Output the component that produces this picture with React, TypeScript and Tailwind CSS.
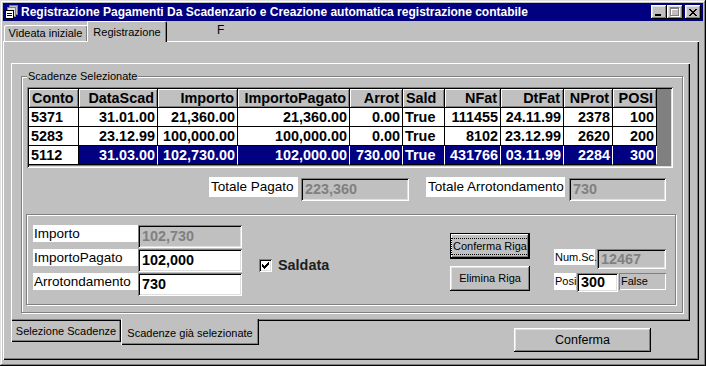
import React from "react";

const raised =
  "shadow-[inset_-1px_-1px_#000,inset_1px_1px_#fff,inset_-2px_-2px_#808080,inset_2px_2px_#dfdfdf]";
const sunken =
  "shadow-[inset_1px_1px_#808080,inset_-1px_-1px_#fff,inset_2px_2px_#000,inset_-2px_-2px_#dfdfdf]";
const etched = "border border-[#808080] shadow-[inset_1px_1px_#fff,1px_1px_#fff]";

type Col = { title: string; w: string; align: "left" | "right" };

const cols: Col[] = [
  { title: "Conto", w: "w-[50px]", align: "left" },
  { title: "DataScad", w: "w-[79px]", align: "right" },
  { title: "Importo", w: "w-[80px]", align: "right" },
  { title: "ImportoPagato", w: "w-[112px]", align: "right" },
  { title: "Arrot", w: "w-[53px]", align: "right" },
  { title: "Sald", w: "w-[42px]", align: "left" },
  { title: "NFat", w: "w-[56px]", align: "right" },
  { title: "DtFat", w: "w-[63px]", align: "right" },
  { title: "NProt", w: "w-[49px]", align: "right" },
  { title: "POSI", w: "w-[44px]", align: "right" },
];

const rows = [
  ["5371", "31.01.00", "21,360.00", "21,360.00", "0.00", "True", "111455", "24.11.99", "2378", "100"],
  ["5283", "23.12.99", "100,000.00", "100,000.00", "0.00", "True", "8102", "23.12.99", "2620", "200"],
  ["5112", "31.03.00", "102,730.00", "102,000.00", "730.00", "True", "431766", "03.11.99", "2284", "300"],
];

const AppIcon = () => (
  <svg width="16" height="16" viewBox="0 0 16 16" shapeRendering="crispEdges">
    <rect x="5" y="1" width="9" height="10" fill="#808080" />
    <rect x="6" y="2" width="7" height="8" fill="#c0c0c0" />
    <rect x="3" y="3" width="9" height="10" fill="#808080" />
    <rect x="4" y="4" width="7" height="8" fill="#dfdfdf" />
    <rect x="1" y="6" width="9" height="9" fill="#000" />
    <rect x="2" y="7" width="7" height="7" fill="#fff" />
    <rect x="3" y="9" width="5" height="1" fill="#000" />
    <rect x="3" y="11" width="5" height="1" fill="#000" />
  </svg>
);

const CloseGlyph = () => (
  <svg width="8" height="7" viewBox="0 0 8 7" shapeRendering="crispEdges">
    {[0, 1, 2, 3, 4, 5, 6].map((i) => (
      <g key={i}>
        <rect x={i} y={i} width="2" height="1" fill="#000" />
        <rect x={6 - i} y={i} width="2" height="1" fill="#000" />
      </g>
    ))}
  </svg>
);

const TitleBar = () => (
  <div className="flex h-[18px] items-center bg-[#000080]">
    <div className="ml-[1px]">
      <AppIcon />
    </div>
    <span className="ml-[1px] text-[12px] font-bold leading-none text-white">
      Registrazione Pagamenti Da Scadenzario e Creazione automatica registrazione contabile
    </span>
    <div className="ml-auto mr-[2px] flex items-center">
      <div className={`flex h-[14px] w-[16px] items-end bg-[#c0c0c0] pb-[3px] pl-[4px] ${raised}`}>
        <div className="h-[2px] w-[6px] bg-black" />
      </div>
      <div className={`relative h-[14px] w-[16px] bg-[#c0c0c0] ${raised}`}>
        <div className="absolute left-[4px] top-[3px] h-[9px] w-[9px] border border-t-2 border-white" />
        <div className="absolute left-[3px] top-[2px] h-[9px] w-[9px] border border-t-2 border-[#808080]" />
      </div>
      <div className={`ml-[2px] flex h-[14px] w-[16px] items-center justify-center bg-[#c0c0c0] ${raised}`}>
        <CloseGlyph />
      </div>
    </div>
  </div>
);

const TopTabs = () => (
  <div className="flex h-[20px] items-end pl-[1px] text-[11px]">
    <div className="flex h-[16px] w-[83px] items-center justify-center rounded-tl-[2px] shadow-[inset_1px_1px_#fff,inset_-1px_0_#808080]">
      Videata iniziale
    </div>
    <div className="relative z-10 -mb-[1px] flex h-[21px] w-[80px] items-start justify-center rounded-tr-[2px] bg-[#c0c0c0] pt-[3px] shadow-[inset_1px_1px_#fff,inset_-1px_0_#000,inset_-2px_0_#808080]">
      Registrazione
    </div>
    <div className="ml-[50px] mt-[2px] self-start text-[12px] leading-[14px]">F</div>
  </div>
);

const Grid = () => (
  <div className={`h-[81px] w-[646px] bg-[#808080] p-[2px] ${sunken}`}>
    <div className="flex h-[19px]">
      {cols.map((c) => (
        <div
          key={c.title}
          className={`${c.w} flex h-[19px] items-center border-b border-r border-black bg-[#c0c0c0] px-[3px] text-[14.4px] font-bold leading-[18px] shadow-[inset_1px_1px_#fff,inset_-1px_-1px_#808080] ${
            c.align === "right" ? "justify-end" : "justify-start"
          }`}
        >
          {c.title}
        </div>
      ))}
    </div>
    {rows.map((r, ri) => {
      const sel = ri === 2;
      return (
        <div key={ri} className="flex h-[19px]">
          {r.map((v, ci) => {
            const c = cols[ci];
            const hi = sel && ci > 0;
            return (
              <div
                key={ci}
                className={`${c.w} flex h-[19px] items-center border-b border-r px-[2px] text-[14.4px] font-bold leading-[18px] ${
                  hi ? "border-white border-b-black bg-[#000080] text-white" : "border-black bg-white text-black"
                } ${c.align === "right" ? "justify-end" : "justify-start"}`}
              >
                {v}
              </div>
            );
          })}
        </div>
      );
    })}
  </div>
);

const Label = ({ w, h, children, cls = "" }: { w: string; h: string; children: React.ReactNode; cls?: string }) => (
  <div className={`${w} ${h} flex items-center whitespace-nowrap bg-white pl-[1px] leading-none ${cls}`}>{children}</div>
);

const Field = ({
  w,
  h,
  value,
  disabled = false,
}: {
  w: string;
  h: string;
  value: string;
  disabled?: boolean;
}) => (
  <div
    className={`${w} ${h} flex items-center pl-[4px] text-[14.4px] font-bold leading-none ${sunken} ${
      disabled ? "bg-[#c0c0c0] text-[#808080]" : "bg-white text-black"
    }`}
  >
    {value}
  </div>
);

const Checkbox = () => (
  <div className={`flex h-[13px] w-[13px] items-center justify-center bg-white ${sunken}`}>
    <svg width="7" height="7" viewBox="0 0 7 7" shapeRendering="crispEdges">
      <path d="M0 2h1v1h1v1h1v-1h1v-1h1v-1h1v-1h1v3h-1v1h-1v1h-1v1h-1v1h-1v-1h-1v-1h-1z" fill="#000" />
    </svg>
  </div>
);

export default function App() {
  return (
    <div className="font-['Liberation_Sans',Arial,sans-serif] text-black">
      <div className="flex h-[366px] w-[706px] flex-col bg-[#c0c0c0] p-[3px] shadow-[inset_-1px_-1px_#000,inset_1px_1px_#dfdfdf,inset_-2px_-2px_#808080,inset_2px_2px_#fff]">
        <TitleBar />
        <TopTabs />

        {/* pannello Registrazione */}
        <div className="flex h-[319px] w-[696px] flex-col pl-[8px] pt-[22px] shadow-[inset_1px_1px_#fff,inset_-1px_-1px_#000,inset_-2px_-2px_#808080]">
          {/* tab interno, linguette in basso */}
          <div className="h-[258px] w-[679px] pl-[10px] pt-[13px] shadow-[inset_1px_1px_#fff,inset_-1px_-1px_#000,inset_-2px_-2px_#808080]">
            <div className={`relative h-[237px] w-[662px] ${etched}`}>
              <div className="absolute -top-[8px] left-[5px] bg-[#c0c0c0] px-[1px] text-[11px] leading-[14px]">
                Scadenze Selezionate
              </div>

              <div className="ml-[5px] mt-[10px]">
                <Grid />
              </div>

              <div className="mt-[9px] flex items-start text-[13.5px]">
                <Label w="w-[89px] ml-[187px]" h="h-[20px]" cls="pl-[2px]">
                  Totale Pagato
                </Label>
                <div className="ml-[3px] mt-[1px]">
                  <Field w="w-[108px]" h="h-[23px]" value="223,360" disabled />
                </div>
                <Label w="w-[139px] ml-[17px]" h="h-[20px]" cls="pl-[2px]">
                  Totale Arrotondamento
                </Label>
                <div className="ml-[4px] mt-[1px]">
                  <Field w="w-[97px]" h="h-[23px]" value="730" disabled />
                </div>
              </div>

              {/* riquadro riga selezionata */}
              <div className={`ml-[4px] mt-[13px] flex h-[91px] w-[650px] items-start ${etched}`}>
                <div className="ml-[6px] mt-[10px] flex flex-col gap-[1px] text-[13.5px]">
                  {[
                    ["Importo", "102,730", true],
                    ["ImportoPagato", "102,000", false],
                    ["Arrotondamento", "730", false],
                  ].map(([l, v, d]) => (
                    <div key={l as string} className="flex h-[23px] items-start">
                      <Label w="w-[105px]" h="h-[17px]">
                        {l}
                      </Label>
                      <Field w="w-[104px]" h="h-[23px]" value={v as string} disabled={d as boolean} />
                    </div>
                  ))}
                </div>

                <div className="ml-[17px] mt-[43px] flex w-[191px] items-center gap-[6px]">
                  <Checkbox />
                  <span className="text-[14.4px] font-bold leading-none text-[#202020]">Saldata</span>
                </div>

                <div className="mt-[18px] flex flex-col gap-[7px] whitespace-nowrap text-[11px]">
                  <div className="flex h-[26px] w-[80px] items-center justify-center border border-black bg-[#c0c0c0] shadow-[inset_-1px_-1px_#000,inset_1px_1px_#fff,inset_-2px_-2px_#808080]">
                    <span className="border border-dotted border-black px-[1px] leading-[15px]">Conferma Riga</span>
                  </div>
                  <div className={`flex h-[25px] w-[80px] items-center justify-center bg-[#c0c0c0] ${raised}`}>
                    Elimina Riga
                  </div>
                </div>

                <div className="ml-[24px] mt-[34px] flex flex-col gap-[4px] text-[11px]">
                  <div className="flex items-start">
                    <Label w="w-[41px]" h="h-[16px]">
                      Num.Sc.
                    </Label>
                    <div className="ml-[2px]">
                      <Field w="w-[69px]" h="h-[20px]" value="12467" disabled />
                    </div>
                  </div>
                  <div className="flex items-start">
                    <Label w="w-[22px]" h="h-[17px]">
                      Posi
                    </Label>
                    <div className="ml-[1px]">
                      <Field w="w-[41px]" h="h-[19px]" value="300" />
                    </div>
                    <div className="ml-[1px] flex h-[17px] w-[47px] items-center pl-[2px] leading-none shadow-[inset_1px_1px_#808080,inset_-1px_-1px_#fff]">
                      False
                    </div>
                  </div>
                </div>
              </div>
            </div>
          </div>

          {/* linguette inferiori + conferma */}
          <div className="flex items-start text-[11px]">
            <div className="flex h-[21px] w-[110px] items-center justify-center shadow-[inset_1px_0_#fff,inset_-1px_-1px_#000,inset_-2px_-2px_#808080]">
              Selezione Scadenze
            </div>
            <div className="relative z-10 -mt-[2px] flex h-[26px] w-[138px] items-center justify-center bg-[#c0c0c0] pt-[2px] shadow-[inset_1px_0_#fff,inset_-1px_-1px_#000,inset_-2px_-2px_#808080]">
              Scadenze già selezionate
            </div>
            <div className={`ml-[255px] mt-[7px] flex h-[24px] w-[137px] items-center justify-center bg-[#c0c0c0] text-[12.5px] ${raised}`}>
              Conferma
            </div>
          </div>
        </div>
      </div>
    </div>
  );
}
